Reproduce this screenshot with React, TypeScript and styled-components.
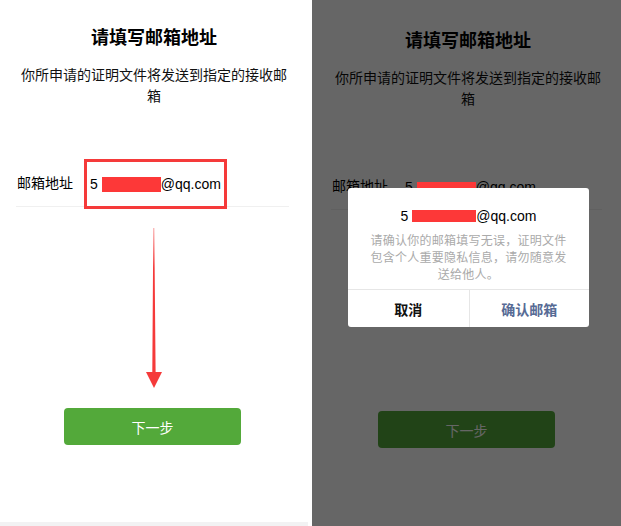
import React from "react";
import styled, { createGlobalStyle } from "styled-components";

const GlobalStyle = createGlobalStyle`
	html, body {
		margin: 0;
		padding: 0;
		background: #fff;
	}
	body {
		font-family: "Liberation Sans", "Noto Sans CJK SC", sans-serif;
		color: #000;
	}
`;

const Page = styled.div`
	display: flex;
	gap: 4px;
	width: 621px;
	height: 526px;
	overflow: hidden;
`;

const Screen = styled.div<{ $shiftX: number; $shiftY: number; $strip?: boolean }>`
	position: relative;
	flex: ${p => (p.$strip ? "0 0 308px" : "1")};
	height: 526px;
	box-sizing: border-box;
	display: flex;
	flex-direction: column;
	align-items: stretch;
	padding-top: ${p => 26 + p.$shiftY}px;
	padding-left: ${p => p.$shiftX}px;
	background: #fff;
	border-bottom: ${p => (p.$strip ? "4px solid #f2f2f3" : "none")};
`;

const Title = styled.h1`
	margin: 0;
	font-size: 18px;
	line-height: 24px;
	font-weight: 700;
	text-align: center;
`;

const Subtitle = styled.p`
	margin: 15px 0 0;
	padding: 0 18px;
	font-size: 14px;
	line-height: 21px;
	text-align: center;
	color: #111;
`;

const Row = styled.div`
	display: flex;
	align-items: center;
	height: 48px;
	margin: 51px 19px 0 16px;
	border-bottom: 1px solid #f0f0f0;
`;

const Label = styled.span`
	flex: 0 0 67px;
	padding-left: 1px;
	font-size: 14px;
`;

const Field = styled.div<{ $highlight?: boolean }>`
	display: flex;
	align-items: center;
	width: 143px;
	height: 50px;
	margin-top: 4px;
	padding-left: 3px;
	box-sizing: border-box;
	border: 3px solid ${p => (p.$highlight ? "#f53a3a" : "transparent")};
	font-size: 14px;
	white-space: nowrap;
`;

const Redact = styled.span<{ $w: number; $h: number }>`
	position: relative;
	z-index: 3;
	display: inline-block;
	width: ${p => p.$w}px;
	height: ${p => p.$h}px;
	margin-left: 4px;
	background: #fd3838;
`;

const ArrowWrap = styled.div`
	display: flex;
	justify-content: center;
	margin-top: 21px;
	height: 160px;
`;

const NextButton = styled.button`
	align-self: center;
	width: 177px;
	height: 37px;
	margin-top: 20px;
	margin-right: 3px;
	border: none;
	border-radius: 4px;
	background: #53a93a;
	color: #fff;
	font-family: inherit;
	font-size: 14px;
`;

const Overlay = styled.div`
	position: absolute;
	inset: 0;
	z-index: 2;
	background: rgba(0, 0, 0, 0.6);
`;

const Dialog = styled.div`
	position: absolute;
	z-index: 4;
	top: 188px;
	left: 36px;
	width: 241px;
	background: #fff;
	border-radius: 3px;
	overflow: hidden;
`;

const DialogBody = styled.div`
	padding: 19px 22px 5px;
	text-align: center;
`;

const DialogEmail = styled.div`
	display: flex;
	justify-content: center;
	align-items: center;
	height: 18px;
	font-size: 14px;
	white-space: nowrap;
`;

const DialogText = styled.p`
	margin: 8px 0 0;
	font-size: 12px;
	line-height: 17px;
	letter-spacing: 0.25px;
	color: #aaa;
`;

const Actions = styled.div`
	display: grid;
	grid-template-columns: 1fr 1fr;
	height: 37px;
	border-top: 1px solid #e6e6e6;
`;

const Action = styled.button<{ $primary?: boolean }>`
	border: none;
	background: none;
	font-family: inherit;
	font-size: 14px;
	font-weight: 700;
	color: ${p => (p.$primary ? "#576b95" : "#111")};
	& + & {
		border-left: 1px solid #e6e6e6;
	}
`;

const Arrow = () => (
	<svg width="20" height="160" viewBox="0 0 20 160">
		<defs>
			<linearGradient id="shaft" x1="0" y1="0" x2="0" y2="1">
				<stop offset="0" stopColor="#f9a0a0" />
				<stop offset="0.25" stopColor="#f53a3a" />
				<stop offset="1" stopColor="#f53a3a" />
			</linearGradient>
		</defs>
		<polygon
			points="9.3,0 10.3,0 11.6,144 18,144 10,160 2,144 8.3,144"
			fill="url(#shaft)"
		/>
	</svg>
);

const Form = ({ dim }: { dim?: boolean }) => (
	<>
		<Title>请填写邮箱地址</Title>
		<Subtitle>你所申请的证明文件将发送到指定的接收邮箱</Subtitle>
		<Row>
			<Label>邮箱地址</Label>
			<Field $highlight={!dim}>
				5
				<Redact $w={59} $h={dim ? 11 : 15} />
				@qq.com
			</Field>
		</Row>
		<ArrowWrap>{!dim && <Arrow />}</ArrowWrap>
		<NextButton>下一步</NextButton>
	</>
);

export default function App() {
	return (
		<>
			<GlobalStyle />
			<Page>
				<Screen $shiftX={0} $shiftY={0} $strip>
					<Form />
				</Screen>
				<Screen $shiftX={3} $shiftY={3}>
					<Form dim />
					<Overlay />
					<Dialog>
						<DialogBody>
							<DialogEmail>
								5
								<Redact $w={64} $h={12} />
								@qq.com
							</DialogEmail>
							<DialogText>
								请确认你的邮箱填写无误，证明文件包含个人重要隐私信息，请勿随意发送给他人。
							</DialogText>
						</DialogBody>
						<Actions>
							<Action>取消</Action>
							<Action $primary>确认邮箱</Action>
						</Actions>
					</Dialog>
				</Screen>
			</Page>
		</>
	);
}
